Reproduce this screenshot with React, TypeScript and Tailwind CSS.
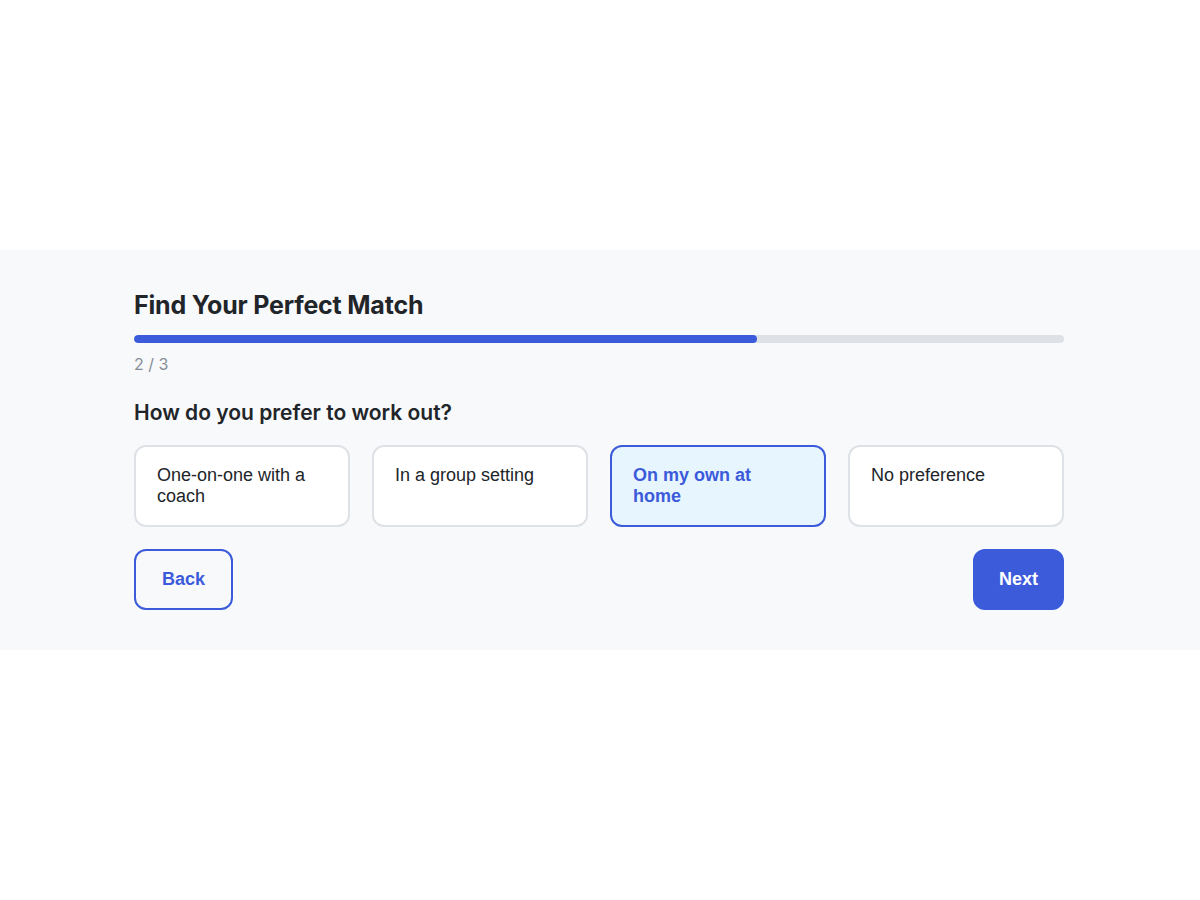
import { useState } from "react";

const options = [
  "One-on-one with a coach",
  "In a group setting",
  "On my own at home",
  "No preference",
];

export default function App() {
  const [selected, setSelected] = useState<number>(2);
  const step = 2;
  const total = 3;

  return (
    <div className="min-h-screen bg-white flex flex-col justify-center">
      <section className="bg-[#f8f9fa] py-10">
        <div className="w-[930px] ml-[134px]">
          <h1 className="font-['Inter',sans-serif] font-bold text-[25px] leading-[31px] text-[#212529] tracking-[-0.2px]">
            Find Your Perfect Match
          </h1>
          <div className="mt-[14px] h-2 w-full rounded-full bg-[#dee2e6] overflow-hidden">
            <div
              className="h-full rounded-full bg-[#3b5bdb]"
              style={{ width: `${Math.round((step / total) * 100)}%` }}
            ></div>
          </div>
          <p className="mt-[9px] font-['Inter',sans-serif] text-base leading-6 text-[#868e96]">
            {step} / {total}
          </p>
          <h2 className="mt-[23px] font-['Inter',sans-serif] font-semibold text-[21px] leading-7 text-[#212529]">
            How do you prefer to work out?
          </h2>
          <div className="mt-[18px] grid grid-cols-4 gap-[22px]">
            {options.map((label, index) => (
              <button
                key={index}
                onClick={() => setSelected(index)}
                className={
                  index === selected
                    ? "flex items-start text-left pl-[21px] pr-8 py-[18px] rounded-xl border-2 border-[#3b5bdb] bg-[#e7f5ff] text-[#3b5bdb] font-bold font-['Liberation_Sans',Arial,sans-serif] text-[18px] leading-[21px]"
                    : "flex items-start text-left pl-[21px] pr-8 py-[18px] rounded-xl border-2 border-[#dee2e6] bg-white text-[#212529] font-['Liberation_Sans',Arial,sans-serif] text-[18px] leading-[21px]"
                }
              >
                <span>{label}</span>
              </button>
            ))}
          </div>
          <div className="mt-[22px] flex justify-between">
            <button className="px-[26px] py-[18px] rounded-xl border-2 border-[#3b5bdb] bg-transparent text-[#3b5bdb] font-bold font-['Liberation_Sans',Arial,sans-serif] text-[18px] leading-[21px]">
              Back
            </button>
            <button className="px-6 py-[18px] rounded-xl border-2 border-[#3b5bdb] bg-[#3b5bdb] text-white font-bold font-['Liberation_Sans',Arial,sans-serif] text-[18px] leading-[21px]">
              Next
            </button>
          </div>
        </div>
      </section>
    </div>
  );
}
